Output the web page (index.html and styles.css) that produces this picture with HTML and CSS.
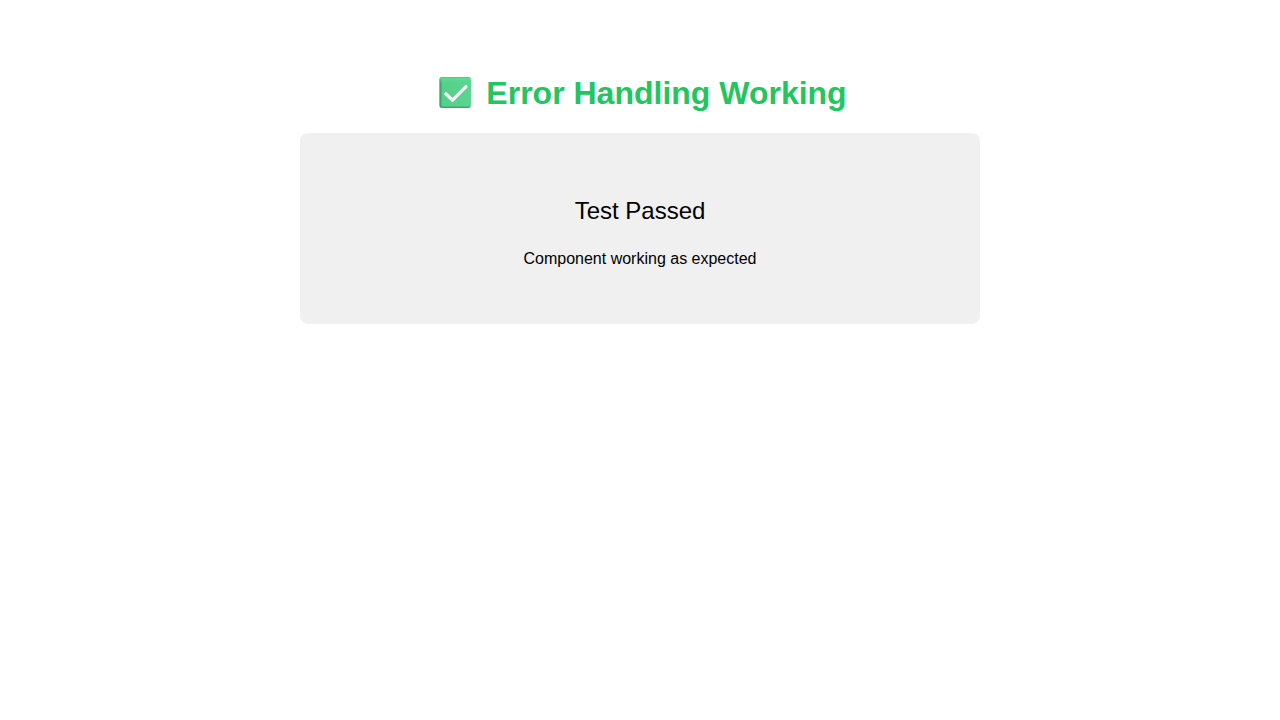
FILE: index.html
```html
<!DOCTYPE html>
<html lang="en">
<head>
<meta charset="utf-8">
<title>Error Handling Working</title>
<link rel="stylesheet" href="styles.css">
</head>
<body>
<main class="page">
  <h1 class="title">
    <svg class="title-icon" viewBox="0 0 38 33" aria-hidden="true">
      <defs>
        <linearGradient id="side" x1="0" y1="0" x2="1" y2="0">
          <stop offset="0" stop-color="#2f8f60"/>
          <stop offset="0.1" stop-color="#55d089"/>
          <stop offset="1" stop-color="#5ad48e"/>
        </linearGradient>
        <linearGradient id="edge" x1="0" y1="0" x2="0" y2="1">
          <stop offset="0" stop-color="#46bd7c" stop-opacity="0.8"/>
          <stop offset="0.05" stop-color="#5fe093" stop-opacity="0.7"/>
          <stop offset="0.2" stop-color="#5fe093" stop-opacity="0"/>
          <stop offset="0.92" stop-color="#2f8f60" stop-opacity="0"/>
          <stop offset="1" stop-color="#2f8f60" stop-opacity="0.8"/>
        </linearGradient>
      </defs>
      <rect x="6.4" y="0" width="31.6" height="31" rx="3" fill="url(#side)"/>
      <rect x="6.4" y="0" width="31.6" height="31" rx="3" fill="url(#edge)"/>
      <path d="M12.8 16.8L19.6 23.2L33 9.6" fill="none" stroke="#f5f2fa" stroke-width="3.3" stroke-linecap="round" stroke-linejoin="round"/>
    </svg>
    <span>Error Handling Working</span>
  </h1>
  <section class="card">
    <p class="card-title">Test Passed</p>
    <p class="card-text">Component working as expected</p>
  </section>
</main>
</body>
</html>
```
FILE: styles.css
```css
body {
  margin: 0;
  background: #fff;
  color: #000;
  font-family: "Liberation Sans", Arial, sans-serif;
  font-size: 16px;
}
.page {
  box-sizing: border-box;
  max-width: 760px;
  margin: 0 auto;
  padding: 75px 40px 40px;
  text-align: center;
}
.title {
  display: flex;
  align-items: center;
  justify-content: center;
  gap: 15px;
  margin: 0 0 21px;
  color: #22c55e;
  font-size: 32px;
  line-height: 37px;
}
.title-icon {
  width: 38px;
  height: 33px;
}
.card {
  padding: 56px 20px;
  border-radius: 8px;
  background: #f0f0f0;
}
.card-title {
  margin: 0 0 17px;
  font-size: 24px;
  line-height: 44px;
}
.card-text {
  margin: 0;
  line-height: 18px;
}
```
